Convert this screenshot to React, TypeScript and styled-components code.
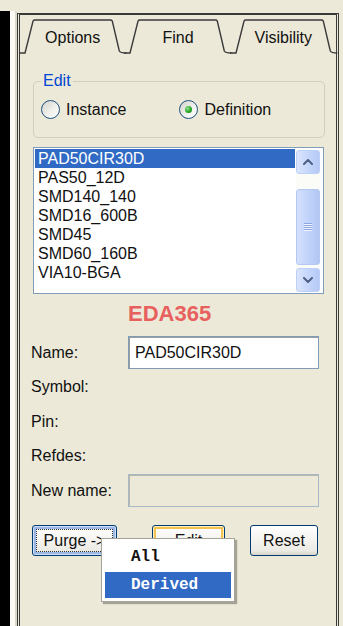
import React from 'react'
import styled, { createGlobalStyle, css } from 'styled-components'

const GlobalStyle = createGlobalStyle`
    html, body {
        margin: 0;
        padding: 0;
        background: #ece9d8;
    }
    body {
        font-family: "Liberation Sans", Arial, sans-serif;
        font-size: 16px;
        color: #111;
    }
`

const Frame = styled.div`
    width: 343px;
    height: 626px;
    display: flex;
    flex-direction: column;
    overflow: hidden;
    background: #ece9d8;
`

const TopStrip = styled.div`
    height: 11px;
    flex-shrink: 0;
    background: #ece9d8;
`

const Body = styled.div`
    flex: 1;
    display: flex;
`

const BlackBar = styled.div`
    width: 10px;
    background: #000;
`

const Gutter = styled.div`
    width: 7px;
    background: linear-gradient(to right, #fbfaf4 0 5px, #dcd9ca 5px 7px);
`

const RightGutter = styled.div`
    width: 4px;
    background: #ece9d8;
`

const Panel = styled.div`
    flex: 1;
    margin-top: 2px;
    display: flex;
    flex-direction: column;
    background: #ece9d8;
    border-top: 2px solid #3a3a3a;
    border-left: 3px double #3a3a3a;
    border-right: 3px double #3a3a3a;
    position: relative;
`

const TabRow = styled.div`
    display: flex;
    height: 35px;
    margin-top: 4px;
`

const TabItem = styled.div`
    flex: 1;
    position: relative;
    display: flex;
    align-items: center;
    justify-content: center;
    font-size: 16px;
    color: #111;
    padding-top: 2px;
`

const TabOutline = styled.svg`
    position: absolute;
    inset: 0;
    width: 100%;
    height: 100%;
    overflow: visible;
`

const TabLabel = styled.span`
    position: relative;
`

const GroupBox = styled.div`
    position: relative;
    margin: 27px 11px 0 13px;
    height: 55px;
    border: 1px solid #d0cebf;
    border-radius: 5px;
    display: flex;
    align-items: center;
    padding-left: 7px;
    gap: 53px;
`

const GroupLegend = styled.span`
    position: absolute;
    top: -10px;
    left: 7px;
    padding: 0 2px;
    line-height: 18px;
    font-size: 16px;
    color: #0046d5;
    background: #ece9d8;
`

const RadioOption = styled.label`
    display: flex;
    align-items: center;
    gap: 6px;
    font-size: 16px;
`

const RadioCircle = styled.span<{ $checked?: boolean }>`
    width: 17px;
    height: 17px;
    border-radius: 50%;
    border: 1px solid #1c5180;
    background: linear-gradient(135deg, #d2d1c8 0%, #f0f0ec 55%, #ffffff 100%);
    display: flex;
    align-items: center;
    justify-content: center;
    ${p => p.$checked && css`
        &::after {
            content: '';
            width: 7px;
            height: 7px;
            border-radius: 50%;
            background: radial-gradient(circle at 35% 35%, #8fe08f, #21a121 60%, #177a17);
        }
    `}
`

const ListBox = styled.div`
    margin: 9px 12px 0 13px;
    height: 145px;
    border: 1px solid #7f9db9;
    background: #fff;
    display: flex;
`

const ListItems = styled.div`
    flex: 1;
    padding: 1px 0 0 1px;
    display: flex;
    flex-direction: column;
`

const ListRow = styled.div<{ $selected?: boolean }>`
    height: 19px;
    line-height: 19px;
    padding-left: 3px;
    font-size: 16px;
    color: ${p => (p.$selected ? '#fff' : '#111')};
    background: ${p => (p.$selected ? '#316ac5' : 'transparent')};
`

const ScrollBar = styled.div`
    width: 24px;
    margin: 2px 3px 1px 1px;
    display: flex;
    flex-direction: column;
    background: #fbfbf8;
`

const ScrollButton = styled.div`
    height: 24px;
    flex-shrink: 0;
    border: 1px solid #bdd0f7;
    border-radius: 3px;
    box-sizing: border-box;
    background: linear-gradient(to right, #dbe5fd, #c2d4fa 60%, #b5c9f5);
    display: flex;
    align-items: center;
    justify-content: center;
`

const ScrollTrack = styled.div`
    flex: 1;
    display: flex;
    flex-direction: column;
    padding: 15px 0 3px;
`

const ScrollThumb = styled.div`
    flex: 1;
    border: 1px solid #b4c8f4;
    border-radius: 3px;
    background: linear-gradient(to right, #d4e0fd, #bed1fa 60%, #b2c6f4);
    display: flex;
    align-items: center;
    justify-content: center;
`

const Grip = styled.div`
    width: 8px;
    height: 8px;
    background: repeating-linear-gradient(to bottom, #8ea7de 0 1px, #eef3ff 1px 2px);
`

const Watermark = styled.div`
    margin-top: 7px;
    padding-left: 108px;
    height: 25px;
    line-height: 25px;
    font-size: 22px;
    font-weight: bold;
    color: #e8605e;
`

const FormGrid = styled.div`
    margin-top: 10px;
    padding: 0 17px 0 11px;
    display: grid;
    grid-template-columns: 97px 1fr;
    grid-auto-rows: 33px;
    row-gap: 1.5px;
    align-items: center;
`

const FieldLabel = styled.span`
    font-size: 16px;
    color: #111;
`

const TextField = styled.div<{ $disabled?: boolean }>`
    height: 33px;
    box-sizing: border-box;
    border: 1px solid ${p => (p.$disabled ? '#a8b8c8' : '#7f9db9')};
    box-shadow: inset 1px 1px 0 ${p => (p.$disabled ? '#b9b7aa' : '#9c9c9c')};
    background: ${p => (p.$disabled ? '#ece9d8' : '#fff')};
    padding-left: 6px;
    display: flex;
    align-items: center;
    font-size: 16px;
    color: #111;
`

const ButtonRow = styled.div`
    position: relative;
    margin-top: 18px;
    padding: 0 18px 0 12px;
    display: flex;
    align-items: center;
`

const XpButton = styled.div<{ $state?: 'focus' | 'hover'; $width: number; $gap?: number }>`
    position: relative;
    width: ${p => p.$width}px;
    height: 31px;
    margin-left: ${p => p.$gap ?? 0}px;
    box-sizing: border-box;
    border: 1px solid #003c74;
    border-radius: 3px;
    background: linear-gradient(#ffffff, #f5f4f0 45%, #ebeae4 85%, #d8d3c8);
    display: flex;
    align-items: center;
    justify-content: center;
    font-size: 16px;
    color: #111;
    ${p => p.$state === 'focus' && css`
        box-shadow: inset 0 0 0 1px #cde0f8, inset 0 0 0 3px #9ab7e6;
        &::after {
            content: '';
            position: absolute;
            inset: 3px;
            border: 1px dotted #333;
        }
    `}
    ${p => p.$state === 'hover' && css`
        box-shadow: inset 0 0 0 1px #fff0c0, inset 0 0 0 3px #f6c24e;
    `}
`

const PopupMenu = styled.div`
    position: absolute;
    left: 81px;
    top: 13px;
    width: 134px;
    box-sizing: border-box;
    border: 1px solid #a6a398;
    background: #fff;
    padding: 3px;
    box-shadow: 2px 2px 1px rgba(0, 0, 0, 0.3);
    font-family: "Liberation Mono", "Courier New", monospace;
    font-weight: bold;
    font-size: 16px;
`

const MenuItem = styled.div<{ $active?: boolean; $height: number }>`
    height: ${p => p.$height}px;
    display: flex;
    align-items: center;
    padding-left: 26px;
    color: ${p => (p.$active ? '#fff' : '#111')};
    background: ${p => (p.$active ? '#316ac5' : 'transparent')};
`

const tabs = ['Options', 'Find', 'Visibility']

const items = ['PAD50CIR30D', 'PAS50_12D', 'SMD140_140', 'SMD16_600B', 'SMD45', 'SMD60_160B', 'VIA10-BGA']

const fields = [
    { label: 'Name:', value: 'PAD50CIR30D' },
    { label: 'Symbol:' },
    { label: 'Pin:' },
    { label: 'Refdes:' },
    { label: 'New name:', value: '', disabled: true },
]

const Chevron = ({ up }: { up?: boolean }) => (
    <svg width="10" height="6" viewBox="0 0 10 6">
        <path
            d={up ? 'M1 5 L5 1 L9 5' : 'M1 1 L5 5 L9 1'}
            fill="none"
            stroke="#4d6185"
            strokeWidth="2"
            strokeLinecap="round"
            strokeLinejoin="round"
        />
    </svg>
)

const App: React.FC = () => {
    return (
        <Frame>
            <GlobalStyle />
            <TopStrip />
            <Body>
                <BlackBar />
                <Gutter />
                <Panel>
                    <TabRow>
                        {tabs.map(name =>
                            <TabItem key={name}>
                                <TabOutline viewBox="0 0 105 35" preserveAspectRatio="none">
                                    <path
                                        d="M-1 34 H5 L13 2 Q13.5 1 15 1 H90 Q91.5 1 92 2 L99 32 Q100 34 106 34"
                                        fill="none"
                                        stroke="#3a3a3a"
                                        strokeWidth="1.4"
                                        vectorEffect="non-scaling-stroke"
                                    />
                                </TabOutline>
                                <TabLabel>{name}</TabLabel>
                            </TabItem>
                        )}
                    </TabRow>

                    <GroupBox>
                        <GroupLegend>Edit</GroupLegend>
                        <RadioOption>
                            <RadioCircle />
                            Instance
                        </RadioOption>
                        <RadioOption>
                            <RadioCircle $checked />
                            Definition
                        </RadioOption>
                    </GroupBox>

                    <ListBox>
                        <ListItems>
                            {items.map((item, i) =>
                                <ListRow key={item} $selected={i === 0}>{item}</ListRow>
                            )}
                        </ListItems>
                        <ScrollBar>
                            <ScrollButton><Chevron up /></ScrollButton>
                            <ScrollTrack>
                                <ScrollThumb><Grip /></ScrollThumb>
                            </ScrollTrack>
                            <ScrollButton><Chevron /></ScrollButton>
                        </ScrollBar>
                    </ListBox>

                    <Watermark>EDA365</Watermark>

                    <FormGrid>
                        {fields.map(({ label, value, disabled }) =>
                            <React.Fragment key={label}>
                                <FieldLabel>{label}</FieldLabel>
                                {value !== undefined
                                    ? <TextField $disabled={disabled}>{value}</TextField>
                                    : <span />}
                            </React.Fragment>
                        )}
                    </FormGrid>

                    <ButtonRow>
                        <XpButton $state="focus" $width={85}>Purge -&gt;</XpButton>
                        <XpButton $state="hover" $width={73} $gap={35}>Edit</XpButton>
                        <XpButton $width={68} $gap={25}>Reset</XpButton>
                        <PopupMenu>
                            <MenuItem $height={30}>All</MenuItem>
                            <MenuItem $height={26} $active>Derived</MenuItem>
                        </PopupMenu>
                    </ButtonRow>
                </Panel>
                <RightGutter />
            </Body>
        </Frame>
    )
}

export default App
